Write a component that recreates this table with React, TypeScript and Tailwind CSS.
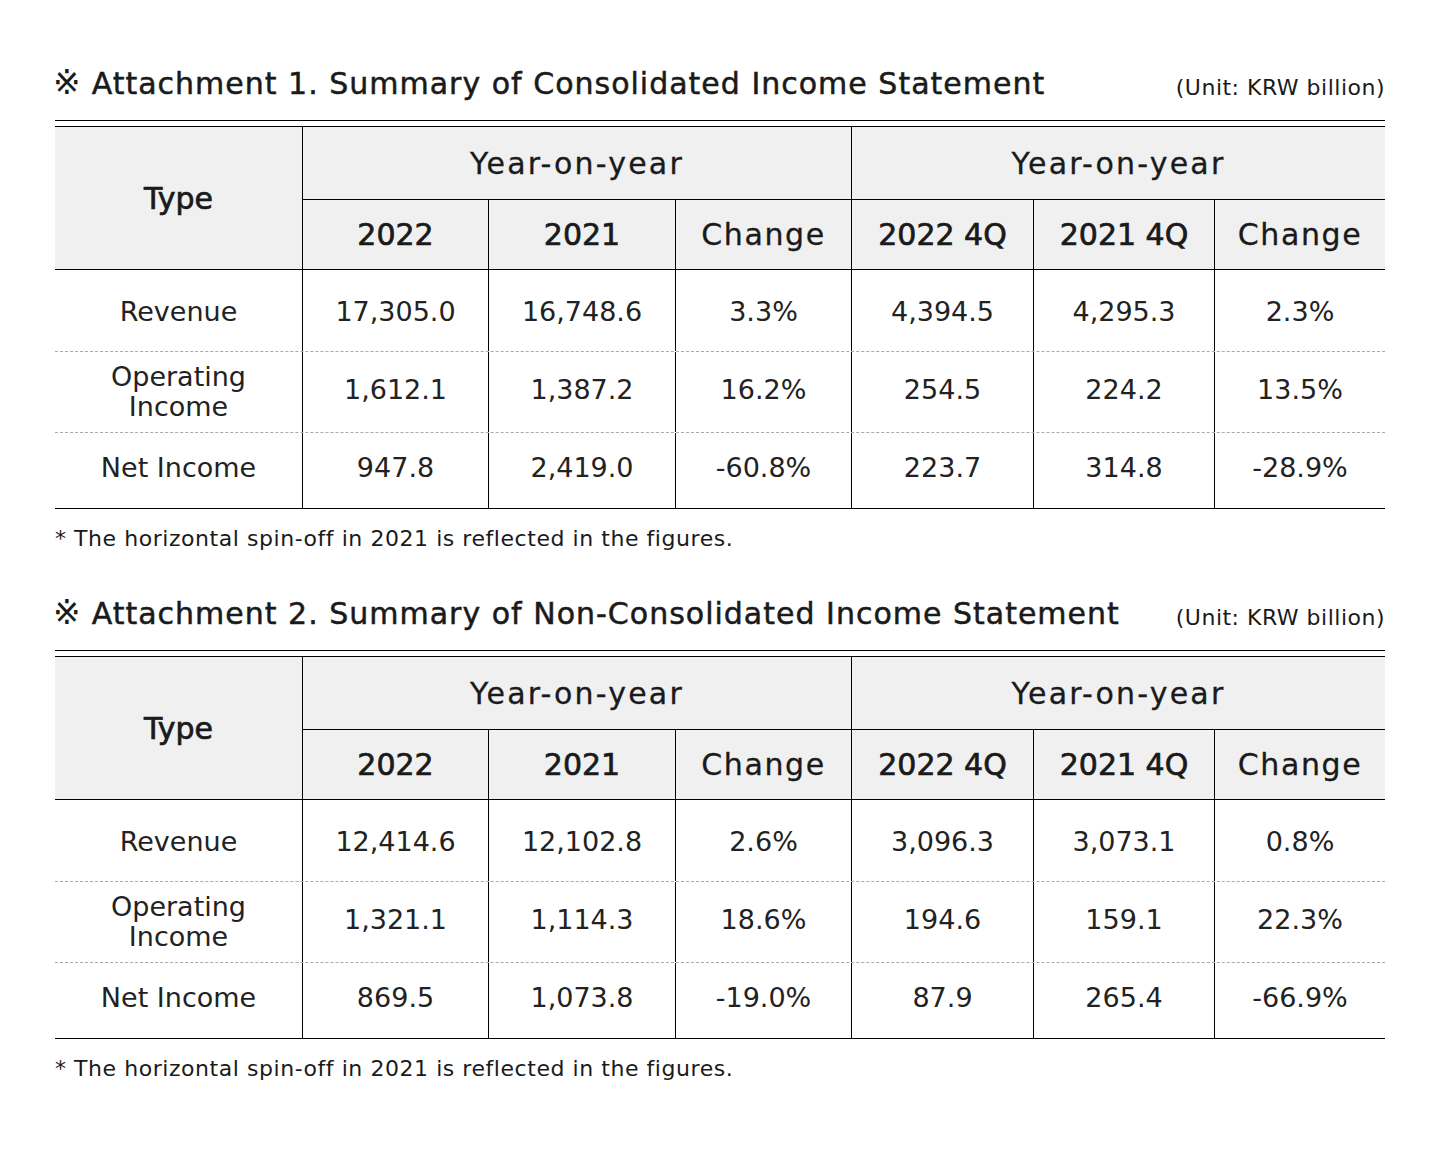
import React from "react";

const widths = ["w-[248px]", "w-[186px]", "w-[187px]", "w-[176px]", "w-[182px]", "w-[181px]", "w-[170px]"];

function Block({ n, kind, rows }: { n: number; kind: string; rows: string[][] }) {
  const heights = ["h-[81px] pt-[4px]", "h-[80px] pb-[4px]", "h-[75px] pb-[4px]"];
  const labels: React.ReactNode[] = [
    "Revenue",
    <span key="op" className="block leading-[30px] relative top-[2px]">Operating<br />Income</span>,
    "Net Income",
  ];
  return (
    <div>
      <div className="flex items-baseline justify-between h-[50px]">
        <div className="text-[30px] leading-[50px] text-[#1a1a1a] tracking-[1px] relative top-[1px] [-webkit-text-stroke:0.5px_#1a1a1a]">
          <span className="text-[33px] mr-[8px] relative left-[-2px] [-webkit-text-stroke:0px]">※</span>Attachment {n}. Summary of {kind} Income Statement
        </div>
        <div className="text-[22px] leading-[50px] tracking-[0.5px] text-[#1a1a1a] relative top-[2px]">(Unit: KRW billion)</div>
      </div>
      <div className="mt-[13px] h-[7px] border-y border-black" />
      <div className="flex h-[143px] bg-[#f0f0f0] border-b border-black text-[#1a1a1a]">
        <div className="w-[248px] border-r border-black flex items-center justify-center text-[30px] [-webkit-text-stroke:0.7px_#1a1a1a]">
          Type
        </div>
        <div className="w-[549px] border-r border-black flex flex-col">
          <div className="h-[73px] border-b border-black flex items-center justify-center text-[30px] tracking-[2.2px] [-webkit-text-stroke:0.3px_#1a1a1a]">
            Year-on-year
          </div>
          <div className="flex flex-1 text-[30px] [-webkit-text-stroke:0.7px_#1a1a1a]">
            <div className="w-[186px] border-r border-black flex items-center justify-center">2022</div>
            <div className="w-[187px] border-r border-black flex items-center justify-center">2021</div>
            <div className="flex-1 flex items-center justify-center tracking-[1.6px] [-webkit-text-stroke:0.3px_#1a1a1a]">Change</div>
          </div>
        </div>
        <div className="flex-1 flex flex-col">
          <div className="h-[73px] border-b border-black flex items-center justify-center text-[30px] tracking-[2.2px] [-webkit-text-stroke:0.3px_#1a1a1a]">
            Year-on-year
          </div>
          <div className="flex flex-1 text-[30px] [-webkit-text-stroke:0.7px_#1a1a1a]">
            <div className="w-[182px] border-r border-black flex items-center justify-center">2022 4Q</div>
            <div className="w-[181px] border-r border-black flex items-center justify-center">2021 4Q</div>
            <div className="flex-1 flex items-center justify-center tracking-[1.6px] [-webkit-text-stroke:0.3px_#1a1a1a]">Change</div>
          </div>
        </div>
      </div>
      {rows.map((r, i) => (
        <div
          key={i}
          className={
            "flex text-[27px] text-[#222] " +
            (i === 2 ? "border-b border-black" : "border-b border-dashed border-[#aaa]")
          }
        >
          {[labels[i], ...r].map((v, j) => (
            <div
              key={j}
              className={
                widths[j] +
                " " +
                heights[i] +
                " flex items-center justify-center text-center " +
                (j < 6 ? "border-r border-black " : "") +
                (j === 6 ? "flex-1" : "")
              }
            >
              {v}
            </div>
          ))}
        </div>
      ))}
      <div className="mt-[16px] text-[22px] leading-[28px] tracking-[0.55px] text-[#1a1a1a]">
        * The horizontal spin-off in 2021 is reflected in the figures.
      </div>
    </div>
  );
}

export default function App() {
  return (
    <div
      className="w-[1440px] h-[1152px] bg-white pl-[55px] pt-[57px]"
      style={{ fontFamily: '"DejaVu Sans", "Noto Sans", sans-serif' }}
    >
      <div className="w-[1330px] flex flex-col gap-[34px]">
        <Block
          n={1}
          kind="Consolidated"
          rows={[
            ["17,305.0", "16,748.6", "3.3%", "4,394.5", "4,295.3", "2.3%"],
            ["1,612.1", "1,387.2", "16.2%", "254.5", "224.2", "13.5%"],
            ["947.8", "2,419.0", "-60.8%", "223.7", "314.8", "-28.9%"],
          ]}
        />
        <Block
          n={2}
          kind="Non-Consolidated"
          rows={[
            ["12,414.6", "12,102.8", "2.6%", "3,096.3", "3,073.1", "0.8%"],
            ["1,321.1", "1,114.3", "18.6%", "194.6", "159.1", "22.3%"],
            ["869.5", "1,073.8", "-19.0%", "87.9", "265.4", "-66.9%"],
          ]}
        />
      </div>
    </div>
  );
}
